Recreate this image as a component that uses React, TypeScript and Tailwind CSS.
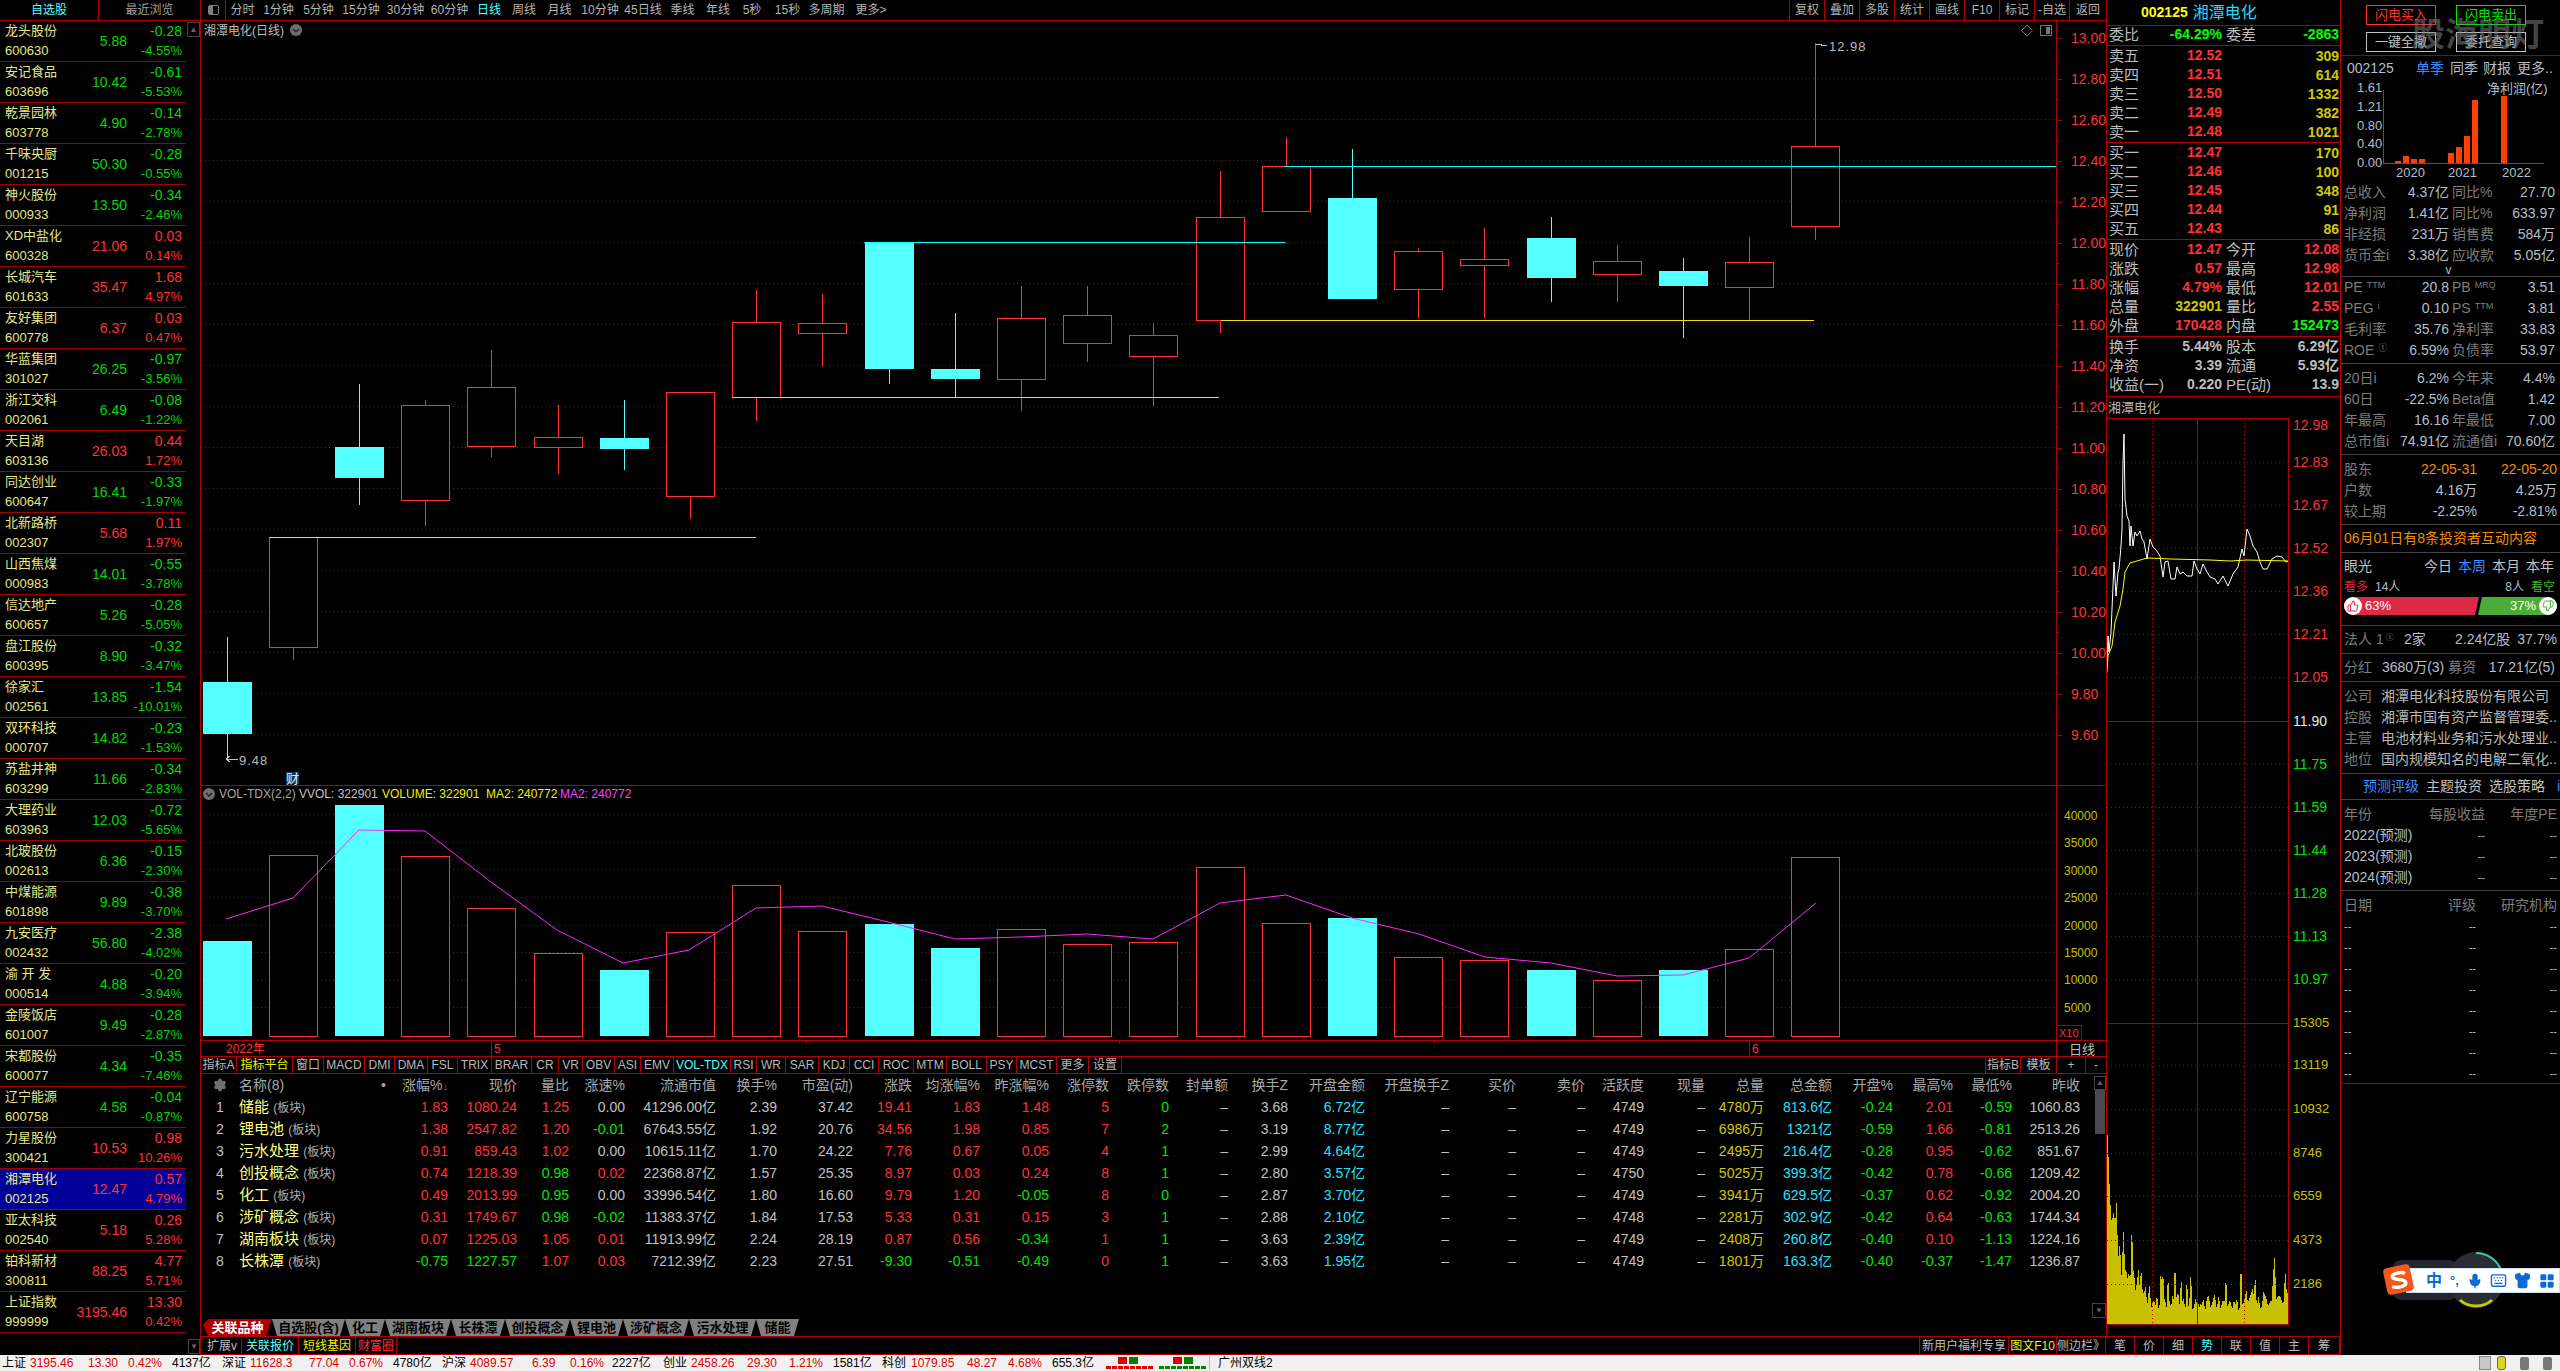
import type { ReactNode } from "react";
import { Mic, Keyboard, Shirt, LayoutGrid, Settings, ThumbsUp, ThumbsDown } from "lucide-react";

const RED = "#ff3232";
const CYAN = "#54ffff";
const LINE = "#b00000";

const watchList = [
    ["龙头股份", "600630", "5.88", "-0.28", "-4.55%"],
    ["安记食品", "603696", "10.42", "-0.61", "-5.53%"],
    ["乾景园林", "603778", "4.90", "-0.14", "-2.78%"],
    ["千味央厨", "001215", "50.30", "-0.28", "-0.55%"],
    ["神火股份", "000933", "13.50", "-0.34", "-2.46%"],
    ["XD中盐化", "600328", "21.06", "0.03", "0.14%"],
    ["长城汽车", "601633", "35.47", "1.68", "4.97%"],
    ["友好集团", "600778", "6.37", "0.03", "0.47%"],
    ["华蓝集团", "301027", "26.25", "-0.97", "-3.56%"],
    ["浙江交科", "002061", "6.49", "-0.08", "-1.22%"],
    ["天目湖", "603136", "26.03", "0.44", "1.72%"],
    ["同达创业", "600647", "16.41", "-0.33", "-1.97%"],
    ["北新路桥", "002307", "5.68", "0.11", "1.97%"],
    ["山西焦煤", "000983", "14.01", "-0.55", "-3.78%"],
    ["信达地产", "600657", "5.26", "-0.28", "-5.05%"],
    ["盘江股份", "600395", "8.90", "-0.32", "-3.47%"],
    ["徐家汇", "002561", "13.85", "-1.54", "-10.01%"],
    ["双环科技", "000707", "14.82", "-0.23", "-1.53%"],
    ["苏盐井神", "603299", "11.66", "-0.34", "-2.83%"],
    ["大理药业", "603963", "12.03", "-0.72", "-5.65%"],
    ["北玻股份", "002613", "6.36", "-0.15", "-2.30%"],
    ["中煤能源", "601898", "9.89", "-0.38", "-3.70%"],
    ["九安医疗", "002432", "56.80", "-2.38", "-4.02%"],
    ["渝 开 发", "000514", "4.88", "-0.20", "-3.94%"],
    ["金陵饭店", "601007", "9.49", "-0.28", "-2.87%"],
    ["宋都股份", "600077", "4.34", "-0.35", "-7.46%"],
    ["辽宁能源", "600758", "4.58", "-0.04", "-0.87%"],
    ["力星股份", "300421", "10.53", "0.98", "10.26%"],
    ["湘潭电化", "002125", "12.47", "0.57", "4.79%"],
    ["亚太科技", "002540", "5.18", "0.26", "5.28%"],
    ["铂科新材", "300811", "88.25", "4.77", "5.71%"],
    ["上证指数", "999999", "3195.46", "13.30", "0.42%"],
];

// [high, bodyTop, bodyBottom, low, falling]
const candles: [number, number, number, number, boolean][] = [
    [637, 682, 734, 759, true],
    [537, 537, 647, 660, false],
    [384, 447, 478, 505, true],
    [400, 405, 500, 526, false],
    [350, 387, 446, 457, false],
    [405, 437, 447, 474, false],
    [400, 438, 449, 470, true],
    [392, 392, 496, 519, false],
    [290, 322, 397, 421, false],
    [294, 323, 333, 366, false],
    [242, 242, 369, 384, true],
    [313, 369, 379, 397, true],
    [286, 318, 379, 411, false],
    [286, 315, 343, 362, false],
    [323, 335, 356, 406, false],
    [171, 217, 320, 333, false],
    [137, 166, 211, 211, false],
    [149, 198, 299, 299, true],
    [248, 251, 289, 318, false],
    [228, 259, 265, 318, false],
    [217, 238, 278, 302, true],
    [245, 261, 274, 302, false],
    [258, 271, 286, 338, true],
    [237, 262, 287, 321, false],
    [43, 146, 226, 240, false],
];
const volTops = [941, 855, 805, 856, 908, 953, 970, 932, 885, 931, 924, 948, 929, 944, 942, 867, 923, 918, 957, 960, 970, 980, 970, 949, 857];
const maLine = "226,919 293,898 359,830 425,831 491,882 557,930 623,963 689,950 756,908 822,906 888,922 955,939 1021,937 1087,934 1153,939 1220,903 1286,895 1352,918 1419,934 1485,957 1551,963 1617,976 1683,975 1749,958 1816,903";

const priceLabels = ["13.00", "12.80", "12.60", "12.40", "12.20", "12.00", "11.80", "11.60", "11.40", "11.20", "11.00", "10.80", "10.60", "10.40", "10.20", "10.00", "9.80", "9.60"];
const volLabels = ["40000", "35000", "30000", "25000", "20000", "15000", "10000", "5000"];

const periods: [string, string][] = [
    ["分时", "w-[33px]"], ["1分钟", "w-[39px]"], ["5分钟", "w-[41px]"], ["15分钟", "w-[44px]"], ["30分钟", "w-[45px]"], ["60分钟", "w-[43px]"],
    ["日线", "w-[36px]"], ["周线", "w-[34px]"], ["月线", "w-[37px]"], ["10分钟", "w-[44px]"], ["45日线", "w-[42px]"], ["季线", "w-[37px]"],
    ["年线", "w-[34px]"], ["5秒", "w-[34px]"], ["15秒", "w-[37px]"], ["多周期", "w-[41px]"], ["更多>", "w-[48px]"],
];
const toolButtons = ["复权", "叠加", "多股", "统计", "画线", "F10", "标记", "-自选"];

const indicatorTabs: [string, string][] = [
    ["指标A", "w-[36px]"], ["指标平台", "w-[56px]"], ["窗口", "w-[31px]"], ["MACD", "w-[41px]"], ["DMI", "w-[30px]"], ["DMA", "w-[33px]"], ["FSL", "w-[30px]"],
    ["TRIX", "w-[34px]"], ["BRAR", "w-[40px]"], ["CR", "w-[27px]"], ["VR", "w-[24px]"], ["OBV", "w-[32px]"], ["ASI", "w-[26px]"], ["EMV", "w-[33px]"],
    ["VOL-TDX", "w-[57px]"], ["RSI", "w-[26px]"], ["WR", "w-[29px]"], ["SAR", "w-[33px]"], ["KDJ", "w-[31px]"], ["CCI", "w-[29px]"], ["ROC", "w-[35px]"],
    ["MTM", "w-[33px]"], ["BOLL", "w-[40px]"], ["PSY", "w-[30px]"], ["MCST", "w-[40px]"], ["更多", "w-[32px]"], ["设置", "w-[33px]"],
];

const tableGrid = "grid grid-cols-[38px_161px_48px_69px_52px_56px_91px_61px_76px_59px_68px_69px_60px_60px_59px_60px_77px_84px_67px_69px_59px_61px_59px_68px_61px_60px_59px_68px]";
const tableHeader = ["涨幅%", "现价", "量比", "涨速%", "流通市值", "换手%", "市盈(动)", "涨跌", "均涨幅%", "昨涨幅%", "涨停数", "跌停数", "封单额", "换手Z", "开盘金额", "开盘换手Z", "买价", "卖价", "活跃度", "现量", "总量", "总金额", "开盘%", "最高%", "最低%", "昨收"];
const cellColor: Record<string, string> = {
    r: "text-[#ff3232]",
    g: "text-[#00e600]",
    w: "text-[#c0c0c0]",
    c: "text-[#28e0ff]",
    y: "text-[#d0c800]",
};
const d = "w–";
const tableRows: [string, string, string[]][] = [
    ["储能", "(板块)", ["r1.83", "r1080.24", "r1.25", "w0.00", "w41296.00亿", "w2.39", "w37.42", "r19.41", "r1.83", "r1.48", "r5", "g0", d, "w3.68", "c6.72亿", d, d, d, "w4749", d, "y4780万", "c813.6亿", "g-0.24", "r2.01", "g-0.59", "w1060.83"]],
    ["锂电池", "(板块)", ["r1.38", "r2547.82", "r1.20", "g-0.01", "w67643.55亿", "w1.92", "w20.76", "r34.56", "r1.98", "r0.85", "r7", "g2", d, "w3.19", "c8.77亿", d, d, d, "w4749", d, "y6986万", "c1321亿", "g-0.59", "r1.66", "g-0.81", "w2513.26"]],
    ["污水处理", "(板块)", ["r0.91", "r859.43", "r1.02", "w0.00", "w10615.11亿", "w1.70", "w24.22", "r7.76", "r0.67", "r0.05", "r4", "g1", d, "w2.99", "c4.64亿", d, d, d, "w4749", d, "y2495万", "c216.4亿", "g-0.28", "r0.95", "g-0.62", "w851.67"]],
    ["创投概念", "(板块)", ["r0.74", "r1218.39", "g0.98", "r0.02", "w22368.87亿", "w1.57", "w25.35", "r8.97", "r0.03", "r0.24", "r8", "g1", d, "w2.80", "c3.57亿", d, d, d, "w4750", d, "y5025万", "c399.3亿", "g-0.42", "r0.78", "g-0.66", "w1209.42"]],
    ["化工", "(板块)", ["r0.49", "r2013.99", "g0.95", "w0.00", "w33996.54亿", "w1.80", "w16.60", "r9.79", "r1.20", "g-0.05", "r8", "g0", d, "w2.87", "c3.70亿", d, d, d, "w4749", d, "y3941万", "c629.5亿", "g-0.37", "r0.62", "g-0.92", "w2004.20"]],
    ["涉矿概念", "(板块)", ["r0.31", "r1749.67", "g0.98", "g-0.02", "w11383.37亿", "w1.84", "w17.53", "r5.33", "r0.31", "r0.15", "r3", "g1", d, "w2.88", "c2.10亿", d, d, d, "w4748", d, "y2281万", "c302.9亿", "g-0.42", "r0.64", "g-0.63", "w1744.34"]],
    ["湖南板块", "(板块)", ["r0.07", "r1225.03", "r1.05", "r0.01", "w11913.99亿", "w2.24", "w28.19", "r0.87", "r0.56", "g-0.34", "r1", "g1", d, "w3.63", "c2.39亿", d, d, d, "w4749", d, "y2408万", "c260.8亿", "g-0.40", "r0.10", "g-1.13", "w1224.16"]],
    ["长株潭", "(板块)", ["g-0.75", "g1227.57", "r1.07", "r0.03", "w7212.39亿", "w2.23", "w27.51", "g-9.30", "g-0.51", "g-0.49", "r0", "g1", d, "w3.63", "c1.95亿", d, d, d, "w4749", d, "y1801万", "c163.3亿", "g-0.40", "g-0.37", "g-1.47", "w1236.87"]],
];

const groupTabs: [string, string][] = [
    ["自选股(含)", "w-[73px]"], ["化工", "w-[40px]"], ["湖南板块", "w-[66px]"], ["长株潭", "w-[54px]"], ["创投概念", "w-[65px]"],
    ["锂电池", "w-[53px]"], ["涉矿概念", "w-[66px]"], ["污水处理", "w-[67px]"], ["储能", "w-[43px]"],
];

const sideTabs = ["笔", "价", "细", "势", "联", "值", "主", "筹"];

const statusCells: [string, string, string][] = [
    ["上证", "text-black", "w-[28px]"], ["3195.46", "text-[#e00000]", "w-[58px]"], ["13.30", "text-[#e00000]", "w-[40px]"], ["0.42%", "text-[#e00000]", "w-[44px]"], ["4137亿", "text-black", "w-[50px]"],
    ["深证", "text-black", "w-[28px]"], ["11628.3", "text-[#e00000]", "w-[59px]"], ["77.04", "text-[#e00000]", "w-[40px]"], ["0.67%", "text-[#e00000]", "w-[44px]"], ["4780亿", "text-black", "w-[49px]"],
    ["沪深", "text-black", "w-[28px]"], ["4089.57", "text-[#e00000]", "w-[62px]"], ["6.39", "text-[#e00000]", "w-[38px]"], ["0.16%", "text-[#e00000]", "w-[42px]"], ["2227亿", "text-black", "w-[51px]"],
    ["创业", "text-black", "w-[28px]"], ["2458.26", "text-[#e00000]", "w-[56px]"], ["29.30", "text-[#e00000]", "w-[42px]"], ["1.21%", "text-[#e00000]", "w-[44px]"], ["1581亿", "text-black", "w-[49px]"],
    ["科创", "text-black", "w-[29px]"], ["1079.85", "text-[#e00000]", "w-[56px]"], ["48.27", "text-[#e00000]", "w-[41px]"], ["4.68%", "text-[#e00000]", "w-[44px]"], ["655.3亿", "text-black", "w-[52px]"],
];

const shareLine = "2107,667 2108,637 2109,653 2111,633 2112,610 2113,587 2114,563 2116,597 2118,573 2119,570 2121,547 2122,530 2123,463 2124,435 2125,500 2127,517 2129,522 2130,547 2131,527 2133,547 2135,533 2137,537 2140,532 2142,540 2144,543 2147,560 2150,540 2153,548 2157,552 2160,557 2163,578 2165,563 2168,562 2171,580 2175,580 2177,568 2180,575 2183,573 2187,577 2192,577 2194,562 2197,570 2200,575 2203,565 2207,573 2210,578 2215,580 2218,585 2223,577 2228,587 2233,575 2238,568 2242,550 2244,557 2247,530 2250,537 2253,547 2257,553 2260,563 2263,570 2267,570 2272,560 2277,557 2282,558 2286,563 2288,562";
const shareAvg = "2107,673 2108,657 2112,647 2115,623 2120,607 2123,590 2125,573 2130,564 2137,562 2147,559 2172,560 2210,561 2230,562 2247,561 2288,562";

// volume spikes of the day chart, one per pixel column
const shareVol = (() => {
    let seed = 17;
    const next = () => {
        seed = (seed * 9301 + 49297) % 233280;
        return seed / 233280;
    };
    let path = "M2107 1326";
    for (let x = 2107; x <= 2288; x += 1) {
        const base = 30 + 190 * Math.exp(-(x - 2107) / 14);
        const spike = next() > 0.88 ? 70 * next() : 0;
        const h = base * (0.45 + 0.6 * next()) + spike + (x > 2240 ? 8 * next() : 0);
        path += ` L${x} ${Math.round(1326 - h)}`;
    }
    return path + " L2288 1326 Z";
})();

const WatchList = () => (
    <div className="w-[201px] shrink-0 border-r border-[#b00000] flex flex-col relative">
        <div className="h-[21px] shrink-0 flex border-b border-[#b00000] text-[12px]">
            <div className="w-[99px] border-r border-[#b00000] flex items-center justify-center text-[#54ffff]">自选股</div>
            <div className="flex-1 flex items-center justify-center text-[#a0a0a0]">最近浏览</div>
        </div>
        <div className="w-[186px]">
            {watchList.map((s, index) => {
                const up = !s[3].startsWith("-");
                const color = up ? "text-[#ff3232]" : "text-[#00d800]";
                return (
                    <div key={index} className={`h-[41px] flex items-center border-b border-[#a00000] ${s[1] === "002125" ? "bg-[#000098]" : ""}`}>
                        <div className="w-[64px] pl-[5px] text-[13px] leading-[20px] text-[#e6e68c] whitespace-nowrap">
                            <div>{s[0]}</div>
                            <div>{s[1]}</div>
                        </div>
                        <div className={`w-[63px] text-right text-[14px] ${color}`}>{s[2]}</div>
                        <div className={`flex-1 pr-[4px] text-right leading-[20px] ${color}`}>
                            <div className="text-[14px]">{s[3]}</div>
                            <div className="text-[13px] whitespace-nowrap">{s[4]}</div>
                        </div>
                    </div>
                );
            })}
        </div>
        <div className="absolute left-[187px] top-[22px] w-[13px] h-[15px] border border-[#444] flex items-center justify-center text-[8px] text-[#666]">▲</div>
        <div className="absolute left-[188px] bottom-[1px] w-[12px] h-[15px] border border-[#444] flex items-center justify-center text-[8px] text-[#666]">▼</div>
    </div>
);

const KLineChart = () => (
    <svg width={1905} height={1036} viewBox="201 21 1905 1036" shapeRendering="crispEdges" className="block shrink-0">
        {priceLabels.slice(1).map((_, i) => (
            <line key={i} x1={201} x2={2056} y1={78.5 + i * 41} y2={78.5 + i * 41} stroke={LINE} strokeDasharray="1 3" />
        ))}
        {[814, 842, 869, 897, 925, 952, 980, 1007].map((y) => (
            <line key={y} x1={201} x2={2056} y1={y + 0.5} y2={y + 0.5} stroke={LINE} strokeDasharray="1 3" />
        ))}

        {candles.map(([hi, top, bottom, lo, falling], i) => {
            const cx = Math.round(226.5 + i * 66.2);
            const color = falling ? CYAN : RED;
            return (
                <g key={i}>
                    <line x1={cx + 0.5} x2={cx + 0.5} y1={hi} y2={lo} stroke={color} />
                    {falling ? (
                        <rect x={cx - 24} y={top} width={49} height={bottom - top} fill={CYAN} />
                    ) : (
                        <rect x={cx - 23.5} y={top + 0.5} width={48} height={bottom - top} fill="#000" stroke={RED} />
                    )}
                </g>
            );
        })}

        <polyline points="269,537.5 756,537.5" stroke="#f0e000" fill="none" />
        <polyline points="732,397.5 1219,397.5" stroke="#f0e000" fill="none" />
        <polyline points="1221,320.5 1814,320.5" stroke="#f0e000" fill="none" />
        <polyline points="864,242.5 1285,242.5" stroke="#00ffff" fill="none" />
        <polyline points="1283,166.5 2056,166.5" stroke="#00ffff" fill="none" />

        <path d="M1816 44 L1827 46" stroke="#c0c0c0" fill="none" />
        <text x={1829} y={51} fontSize={13} fill="#b8b8b8" letterSpacing={1}>12.98</text>
        <path d="M226 759 L238 759 M226 759 L230 756 M226 759 L230 762" stroke="#c0c0c0" fill="none" />
        <text x={239} y={765} fontSize={13} fill="#b8b8b8" letterSpacing={1}>9.48</text>

        <text x={204} y={35} fontSize={12} fill="#bdbdbd">湘潭电化(日线)</text>
        <g shapeRendering="auto">
            <circle cx={296} cy={30} r={6} fill="#6e6e6e" />
            <path d="M293 29 L296 32 L299 29" stroke="#222" strokeWidth={1.4} fill="none" />
            <path d="M2027 25 L2032.5 30.5 L2027 36 L2021.5 30.5 Z" stroke="#777" fill="none" />
        </g>
        <rect x={2040.5} y={25.5} width={11} height={10} rx={1.5} stroke="#777" strokeWidth={1.5} fill="none" />
        <rect x={2046} y={27} width={4} height={7} fill="#777" />

        <rect x={286} y={772} width={13} height={12} fill="#0a3868" />
        <text x={286} y={783} fontSize={13} fill="#e8e8e8">财</text>

        {/* volume */}
        <line x1={201} x2={2106} y1={785.5} y2={785.5} stroke={LINE} />
        <g shapeRendering="auto">
            <circle cx={209} cy={794} r={6} fill="#6e6e6e" />
            <path d="M206 793 L209 796 L212 793" stroke="#222" strokeWidth={1.4} fill="none" />
        </g>
        <text x={219} y={798} fontSize={12} fill="#a8a8a8">VOL-TDX(2,2)</text>
        <text x={299} y={798} fontSize={12} fill="#c0c0c0">VVOL: 322901</text>
        <text x={382} y={798} fontSize={12} fill="#f0f000">VOLUME: 322901</text>
        <text x={486} y={798} fontSize={12} fill="#f0f000">MA2: 240772</text>
        <text x={560} y={798} fontSize={12} fill="#ff40ff">MA2: 240772</text>

        {volTops.map((top, i) => {
            const cx = Math.round(226.5 + i * 66.2);
            const falling = candles[i][4];
            return falling ? (
                <rect key={i} x={cx - 24} y={top} width={49} height={1036 - top} fill={CYAN} />
            ) : (
                <rect key={i} x={cx - 23.5} y={top + 0.5} width={48} height={1036 - top} fill="#000" stroke={RED} />
            );
        })}
        <polyline points={maLine} fill="none" stroke="#ff28ff" shapeRendering="auto" />

        {/* price scale */}
        <line x1={2056.5} x2={2056.5} y1={21} y2={1057} stroke={LINE} />
        {Array.from({ length: 35 }).map((_, i) => (
            <line key={i} x1={2056} x2={i % 2 === 0 ? 2062 : 2059} y1={Math.round(37.5 + i * 20.5) + 0.5} y2={Math.round(37.5 + i * 20.5) + 0.5} stroke={LINE} />
        ))}
        {priceLabels.map((p, i) => (
            <text key={p} x={2071} y={43 + i * 41} fontSize={14} fill={RED} shapeRendering="auto">{p}</text>
        ))}
        {volLabels.map((p, i) => (
            <text key={p} x={2064} y={820 + i * 27.4} fontSize={12} fill="#c8c000">{p}</text>
        ))}
        <rect x={2056.5} y={1025.5} width={25} height={15} fill="none" stroke={LINE} />
        <text x={2059} y={1037} fontSize={11} fill={RED}>X10</text>

        {/* date axis */}
        <line x1={201} x2={2106} y1={1040.5} y2={1040.5} stroke={LINE} />
        <line x1={201} x2={2106} y1={1056.5} y2={1056.5} stroke={LINE} />
        <text x={226} y={1053} fontSize={12} fill={RED}>2022年</text>
        <line x1={491.5} x2={491.5} y1={1041} y2={1056} stroke={LINE} />
        <text x={494} y={1053} fontSize={12} fill={RED}>5</text>
        <line x1={1749.5} x2={1749.5} y1={1041} y2={1056} stroke={LINE} />
        <text x={1752} y={1053} fontSize={12} fill={RED}>6</text>
        {[806, 1119, 1434].map((x) => (
            <line key={x} x1={x + 0.5} x2={x + 0.5} y1={1041} y2={1044} stroke={LINE} />
        ))}
        <text x={2069} y={1054} fontSize={13} fill="#bdbdbd">日线</text>
    </svg>
);

const Toolbar = () => (
    <div className="h-[21px] shrink-0 flex border-b border-[#b00000] text-[12px] text-[#b4b4b4]">
        <div className="w-[25px] flex items-center justify-center border-r border-[#b00000]">
            <div className="w-[11px] h-[10px] rounded-[2px] border-[1.5px] border-[#808080] flex">
                <div className="w-[4px] bg-[#808080]"></div>
            </div>
        </div>
        <div className="flex">
            {periods.map(([label, w]) => (
                <div key={label} className={`${w} flex items-center justify-center whitespace-nowrap ${label === "日线" ? "text-[#54ffff]" : ""}`}>{label}</div>
            ))}
        </div>
        <div className="ml-auto flex">
            {toolButtons.map((b) => (
                <div key={b} className="w-[35px] flex items-center justify-center border-l border-[#b00000] whitespace-nowrap">{b}</div>
            ))}
            <div className="w-[37px] flex items-center justify-center border-l border-[#b00000]">返回</div>
        </div>
    </div>
);

const IndicatorTabs = () => (
    <div className="h-[17px] shrink-0 flex border-b border-[#b00000] text-[12px] text-[#b8b8b8]">
        {indicatorTabs.map(([label, w]) => (
            <div key={label} className={`${w} flex items-center justify-center border-r border-[#b00000] whitespace-nowrap overflow-hidden ${label === "指标平台" ? "text-[#f0f000]" : ""} ${label === "VOL-TDX" ? "text-[#54ffff]" : ""}`}>
                {label}
            </div>
        ))}
        <div className="ml-auto flex">
            <div className="w-[36px] flex items-center justify-center border-x border-[#b00000]">指标B</div>
            <div className="w-[36px] flex items-center justify-center border-r border-[#b00000]">模板</div>
            <div className="w-[29px] flex items-center justify-center border-r border-[#b00000]">+</div>
            <div className="w-[20px] flex items-center justify-center">-</div>
        </div>
    </div>
);

const BlockTable = () => (
    <div className="flex-1 relative overflow-hidden">
        <div className={`${tableGrid} h-[22px] items-center text-[14px] text-[#a8a8a8]`}>
            <div className="flex justify-center">
                <Settings size={14} className="text-[#707070] fill-[#707070]" />
            </div>
            <div className="flex justify-between pr-[14px]">
                <span>名称(8)</span>
                <span className="text-[#a0a0a0]">•</span>
            </div>
            {tableHeader.map((h, i) => (
                <div key={h} className="text-right whitespace-nowrap">
                    {h}
                    {i === 0 && <span className="text-[#ff3232] text-[11px]">↓</span>}
                </div>
            ))}
        </div>
        {tableRows.map(([name, kind, cells], index) => (
            <div key={name} className={`${tableGrid} h-[22px] items-center text-[14px]`}>
                <div className="text-center text-[#c0c0c0]">{index + 1}</div>
                <div className="text-[15px] text-[#ffff80] whitespace-nowrap">
                    {name} <span className="text-[12px] text-[#b0b0b0]">{kind}</span>
                </div>
                {cells.map((c, i) => (
                    <div key={i} className={`text-right whitespace-nowrap ${cellColor[c[0]]}`}>{c.slice(1)}</div>
                ))}
            </div>
        ))}
        <div className="absolute right-0 top-[2px] w-[12px] h-[14px] border border-[#444] flex items-center justify-center text-[8px] text-[#666]">▲</div>
        <div className="absolute right-[1px] top-[16px] w-[10px] h-[44px] bg-[#4a4a4a]"></div>
        <div className="absolute right-0 bottom-[1px] w-[14px] h-[15px] border border-[#444] flex items-center justify-center text-[8px] text-[#666]">▼</div>
    </div>
);

const GroupTabs = () => (
    <div className="h-[17px] shrink-0 flex pl-[2px] text-[13px] font-bold text-black">
        <div className="w-[69px] bg-[#b00000] text-white flex items-center justify-center [clip-path:polygon(5px_0,100%_0,calc(100%-6px)_100%,5px_100%,0_35%)]">关联品种</div>
        {groupTabs.map(([label, w]) => (
            <div key={label} className={`${w} bg-[#808080] flex items-center justify-center whitespace-nowrap [clip-path:polygon(0_0,100%_0,calc(100%-5px)_100%,5px_100%)]`}>
                {label}
            </div>
        ))}
    </div>
);

const QuoteRow = ({ a, b, c, e, bColor, eColor }: { a: string; b: string; c?: string; e?: string; bColor: string; eColor?: string }) => (
    <div className="h-[19px] flex items-center text-[14px] font-bold whitespace-nowrap">
        <div className="w-[115px] pl-[2px] flex justify-between">
            <span className="text-[15px] font-normal text-[#bdbdbd]">{a}</span>
            <span className={bColor}>{b}</span>
        </div>
        <div className="flex-1 pl-[4px] pr-[1px] flex justify-between">
            <span className="text-[15px] font-normal text-[#bdbdbd]">{c}</span>
            <span className={eColor}>{e}</span>
        </div>
    </div>
);

const AskRow = ({ a, p, v }: { a: string; p: string; v: string }) => (
    <div className="h-[19px] flex items-center text-[14px] font-bold">
        <div className="w-[115px] pl-[2px] flex justify-between">
            <span className="text-[15px] font-normal text-[#bdbdbd]">{a}</span>
            <span className="text-[#ff3232]">{p}</span>
        </div>
        <span className="flex-1 pr-[1px] text-right text-[#d0c800]">{v}</span>
    </div>
);

const QuotePanel = () => (
    <div className="w-[234px] shrink-0 border-l border-[#b00000] flex flex-col">
        <div className="h-[26px] border-b border-[#b00000] flex items-center pl-[34px] gap-[5px]">
            <span className="text-[14px] font-bold text-[#ffff00]">002125</span>
            <span className="text-[16px] text-[#28d8ff]">湘潭电化</span>
        </div>
        <div className="h-[20px] border-b border-[#b00000] flex items-center text-[14px] font-bold">
            <div className="w-[115px] pl-[2px] flex justify-between">
                <span className="text-[15px] font-normal text-[#bdbdbd]">委比</span>
                <span className="text-[#00ff00]">-64.29%</span>
            </div>
            <div className="flex-1 pl-[4px] pr-[1px] flex justify-between">
                <span className="text-[15px] font-normal text-[#bdbdbd]">委差</span>
                <span className="text-[#00ff00]">-2863</span>
            </div>
        </div>
        <div className="h-[97px] pt-[1px] border-b border-[#b00000]">
            <AskRow a="卖五" p="12.52" v="309" />
            <AskRow a="卖四" p="12.51" v="614" />
            <AskRow a="卖三" p="12.50" v="1332" />
            <AskRow a="卖二" p="12.49" v="382" />
            <AskRow a="卖一" p="12.48" v="1021" />
        </div>
        <div className="h-[97px] pt-[1px] border-b border-[#b00000]">
            <AskRow a="买一" p="12.47" v="170" />
            <AskRow a="买二" p="12.46" v="100" />
            <AskRow a="买三" p="12.45" v="348" />
            <AskRow a="买四" p="12.44" v="91" />
            <AskRow a="买五" p="12.43" v="86" />
        </div>
        <div className="h-[97px] pt-[1px] border-b border-[#b00000]">
            <QuoteRow a="现价" b="12.47" bColor="text-[#ff3232]" c="今开" e="12.08" eColor="text-[#ff3232]" />
            <QuoteRow a="涨跌" b="0.57" bColor="text-[#ff3232]" c="最高" e="12.98" eColor="text-[#ff3232]" />
            <QuoteRow a="涨幅" b="4.79%" bColor="text-[#ff3232]" c="最低" e="12.01" eColor="text-[#ff3232]" />
            <QuoteRow a="总量" b="322901" bColor="text-[#d0c800]" c="量比" e="2.55" eColor="text-[#ff3232]" />
            <QuoteRow a="外盘" b="170428" bColor="text-[#ff3232]" c="内盘" e="152473" eColor="text-[#00ff00]" />
        </div>
        <div className="h-[60px] pt-[1px] border-b border-[#b00000]">
            <QuoteRow a="换手" b="5.44%" bColor="text-[#bdbdbd]" c="股本" e="6.29亿" eColor="text-[#bdbdbd]" />
            <QuoteRow a="净资" b="3.39" bColor="text-[#bdbdbd]" c="流通" e="5.93亿" eColor="text-[#bdbdbd]" />
            <QuoteRow a="收益(一)" b="0.220" bColor="text-[#bdbdbd]" c="PE(动)" e="13.9" eColor="text-[#bdbdbd]" />
        </div>
        <div className="h-[21px] pl-[1px] flex items-center text-[13px] text-[#b4b4b4]">湘潭电化</div>
        <ShareChart />
    </div>
);

const ShareChart = () => {
    const up: [string, number][] = [["12.98", 419], ["12.83", 463], ["12.67", 506], ["12.52", 549], ["12.36", 592], ["12.21", 635], ["12.05", 678]];
    const down: [string, number][] = [["11.75", 765], ["11.59", 808], ["11.44", 851], ["11.28", 894], ["11.13", 937], ["10.97", 980]];
    const vols: [string, number][] = [["15305", 1024], ["13119", 1066], ["10932", 1110], ["8746", 1154], ["6559", 1197], ["4373", 1241], ["2186", 1285]];
    return (
        <svg width={233} height={917} viewBox="2107 419 233 917" shapeRendering="crispEdges" className="block">
            <path d={shareVol} fill="#c8c000" />
            {[...up, ...down, ...vols.slice(1)].map(([l, y]) => (
                <line key={l} x1={2107} x2={2289} y1={y + 0.5} y2={y + 0.5} stroke={LINE} strokeDasharray="1 3" />
            ))}
            <rect x={2106.5} y={419.5} width={182} height={906} fill="none" stroke={LINE} />
            <line x1={2107} x2={2289} y1={722.5} y2={722.5} stroke={LINE} />
            <line x1={2107} x2={2289} y1={1024.5} y2={1024.5} stroke={LINE} />
            <line x1={2197.5} x2={2197.5} y1={419} y2={1326} stroke={LINE} />
            <line x1={2152.5} x2={2152.5} y1={419} y2={1326} stroke={LINE} strokeDasharray="1 3" />
            <line x1={2244.5} x2={2244.5} y1={419} y2={1326} stroke={LINE} strokeDasharray="1 3" />
            <polyline points={shareLine} fill="none" stroke="#fff" shapeRendering="auto" />
            <polyline points={shareAvg} fill="none" stroke="#ffff00" shapeRendering="auto" />
            {up.map(([l, y]) => (
                <text key={l} x={2293} y={Math.max(y + 5, 431)} fontSize={14} fill={RED}>{l}</text>
            ))}
            <text x={2293} y={727} fontSize={14} fill="#e8e8e8">11.90</text>
            {down.map(([l, y]) => (
                <text key={l} x={2293} y={y + 5} fontSize={14} fill="#00e600">{l}</text>
            ))}
            {vols.map(([l, y]) => (
                <text key={l} x={2293} y={y + 4} fontSize={13} fill="#c8c000">{l}</text>
            ))}
        </svg>
    );
};

const F10Row = ({ a, b, c, e }: { a: ReactNode; b: string; c: ReactNode; e: string }) => (
    <div className="h-[21px] flex items-center pl-[3px] pr-[5px] text-[14px] whitespace-nowrap">
        <div className="w-[105px] flex justify-between">
            <span className="text-[#7c7c7c]">{a}</span>
            <span className="text-[#b4bec8]">{b}</span>
        </div>
        <div className="flex-1 pl-[3px] flex justify-between">
            <span className="text-[#7c7c7c]">{c}</span>
            <span className="text-[#b4bec8]">{e}</span>
        </div>
    </div>
);

const Sup = ({ t }: { t: string }) => <sup className="text-[9px] ml-[4px]">{t}</sup>;

const Dashes = () => (
    <div className="h-[21px] flex items-center pl-[3px] pr-[3px] text-[11px] text-[#c0c0c0]">
        <span className="w-[70px]">--</span>
        <span className="w-[62px] text-right">--</span>
        <span className="flex-1 text-right">--</span>
    </div>
);

const ThreeRow = ({ a, b, c }: { a: string; b: string; c: string }) => (
    <div className="h-[21px] flex items-center pl-[3px] pr-[3px] text-[14px] whitespace-nowrap text-[#b4bec8]">
        <span className="w-[60px] text-[#7c7c7c]">{a}</span>
        <span className="w-[73px] text-right">{b}</span>
        <span className="flex-1 text-right">{c}</span>
    </div>
);

const MiniBars = () => {
    const bars = [[2395, 161], [2403, 156], [2411, 159], [2419, 159], [2448, 153], [2456, 147], [2464, 136], [2472, 100], [2501, 96]];
    return (
        <svg width={219} height={102} viewBox="2341 80 219 102" className="block" shapeRendering="crispEdges">
            <line x1={2383.5} x2={2383.5} y1={90} y2={163} stroke="#555" />
            <line x1={2383} x2={2544} y1={163.5} y2={163.5} stroke="#555" />
            {[["1.61", 92], ["1.21", 111], ["0.80", 130], ["0.40", 148], ["0.00", 167]].map(([t, y]) => (
                <text key={t} x={2357} y={y} fontSize={13} fill="#b4bec8">{t}</text>
            ))}
            {bars.map(([x, y]) => (
                <rect key={x} x={x} y={y} width={6} height={163 - y} fill="#ff4000" />
            ))}
            <text x={2487} y={93} fontSize={13} fill="#b4bec8">净利润(亿)</text>
            {[["2020", 2410], ["2021", 2462], ["2022", 2516]].map(([t, x]) => (
                <text key={t} x={Number(x) - 14} y={177} fontSize={13} fill="#b4bec8">{t}</text>
            ))}
        </svg>
    );
};

const F10Panel = () => (
    <div className="w-[219px] shrink-0 relative">
        <div className="h-[56px] border-b border-[#a00000] pl-[25px] pt-[5px] grid grid-cols-[70px_70px] gap-x-[20px] gap-y-[4px] text-[13px]">
            <div className="h-[20px] border border-[#ff3232] text-[#ff3232] flex items-center justify-center">闪电买入</div>
            <div className="h-[20px] border border-[#00e600] text-[#00e600] flex items-center justify-center">闪电卖出</div>
            <div className="h-[20px] border border-[#c0c0c0] text-[#c0c0c0] flex items-center justify-center">一键全撤</div>
            <div className="h-[20px] border border-[#c0c0c0] text-[#c0c0c0] flex items-center justify-center">委托查询</div>
        </div>
        <div className="h-[24px] flex items-center text-[14px] text-[#b4bec8] pl-[6px]">
            <span className="w-[69px]">002125</span>
            <span className="w-[34px] text-[#3c8cff]">单季</span>
            <span className="w-[33px]">同季</span>
            <span className="w-[34px]">财报</span>
            <span>更多..</span>
        </div>
        <MiniBars />
        <div className="border-b border-[#444] h-[95px]">
            <F10Row a="总收入" b="4.37亿" c="同比%" e="27.70" />
            <F10Row a="净利润" b="1.41亿" c="同比%" e="633.97" />
            <F10Row a="非经损" b="231万" c="销售费" e="584万" />
            <F10Row a="货币金i" b="3.38亿" c="应收款" e="5.05亿" />
            <div className="h-[11px] leading-[8px] text-center text-[12px] text-[#b4bec8] pr-[4px]">v</div>
        </div>
        <div className="border-b border-[#444] h-[87px]">
            <F10Row a={<>PE<Sup t="TTM" /></>} b="20.8" c={<>PB<Sup t="MRQ" /></>} e="3.51" />
            <F10Row a={<>PEG<Sup t="i" /></>} b="0.10" c={<>PS<Sup t="TTM" /></>} e="3.81" />
            <F10Row a="毛利率" b="35.76" c="净利率" e="33.83" />
            <F10Row a={<>ROE<Sup t="①" /></>} b="6.59%" c="负债率" e="53.97" />
        </div>
        <div className="border-b border-[#444] h-[91px] pt-[4px]">
            <F10Row a="20日i" b="6.2%" c="今年来" e="4.4%" />
            <F10Row a="60日" b="-22.5%" c="Beta值" e="1.42" />
            <F10Row a="年最高" b="16.16" c="年最低" e="7.00" />
            <F10Row a="总市值i" b="74.91亿" c="流通值i" e="70.60亿" />
        </div>
        <div className="border-b border-[#444] h-[70px] pt-[4px]">
            <div className="h-[21px] flex items-center pl-[3px] pr-[3px] text-[14px] text-[#f08c00] whitespace-nowrap">
                <span className="w-[60px] text-[#7c7c7c]">股东</span>
                <span className="w-[73px] text-right">22-05-31</span>
                <span className="flex-1 text-right">22-05-20</span>
            </div>
            <ThreeRow a="户数" b="4.16万" c="4.25万" />
            <ThreeRow a="较上期" b="-2.25%" c="-2.81%" />
        </div>
        <div className="h-[28px] border-b border-[#444] flex items-center pl-[3px] text-[14px] text-[#f08c00] whitespace-nowrap">06月01日有8条投资者互动内容</div>
        <div className="border-b border-[#444] h-[73px]">
            <div className="h-[26px] flex items-center pl-[3px] text-[14px] text-[#c0c0c0]">
                <span className="w-[80px]">眼光</span>
                <span className="w-[34px]">今日</span>
                <span className="w-[34px] text-[#3c8cff]">本周</span>
                <span className="w-[34px]">本月</span>
                <span>本年</span>
            </div>
            <div className="h-[15px] flex items-center justify-between pl-[3px] pr-[5px] text-[12px]">
                <div><span className="text-[#dc2a46]">看多</span><span className="ml-[7px] text-[#b4bec8]">14人</span></div>
                <div><span className="text-[#b4bec8]">8人</span><span className="ml-[7px] text-[#4bad37]">看空</span></div>
            </div>
            <div className="mt-[3px] h-[18px] mx-[3px] flex text-[13px] text-white">
                <div className="w-[135px] bg-[#dc2a46] rounded-l-[9px] flex items-center [clip-path:polygon(0_0,100%_0,calc(100%-4px)_100%,0_100%)]">
                    <div className="w-[18px] h-[18px] rounded-full bg-white flex items-center justify-center">
                        <ThumbsUp size={12} className="text-[#dc2a46]" />
                    </div>
                    <span className="ml-[3px]">63%</span>
                </div>
                <div className="flex-1 -ml-[1px] bg-[#4bad37] rounded-r-[9px] flex items-center justify-end [clip-path:polygon(4px_0,100%_0,100%_100%,0_100%)]">
                    <span className="mr-[3px]">37%</span>
                    <div className="w-[18px] h-[18px] rounded-full bg-white flex items-center justify-center">
                        <ThumbsDown size={12} className="text-[#4bad37]" />
                    </div>
                </div>
            </div>
        </div>
        <div className="h-[28px] border-b border-[#444] flex items-center pl-[3px] pr-[3px] text-[14px] text-[#b4bec8] whitespace-nowrap">
            <span className="w-[60px] text-[#7c7c7c]">法人 1<sup className="text-[8px] ml-[2px]">①</sup></span>
            <span className="w-[51px]">2家</span>
            <span>2.24亿股</span>
            <span className="ml-auto">37.7%</span>
        </div>
        <div className="h-[28px] border-b border-[#444] flex items-center pl-[3px] pr-[5px] text-[14px] text-[#b4bec8] whitespace-nowrap">
            <span className="w-[38px] text-[#7c7c7c]">分红</span>
            <span className="w-[66px]">3680万(3)</span>
            <span className="text-[#7c7c7c]">募资</span>
            <span className="ml-auto">17.21亿(5)</span>
        </div>
        <div className="border-b border-[#444] h-[92px] pt-[4px] text-[14px] whitespace-nowrap">
            {[["公司", "湘潭电化科技股份有限公司"], ["控股", "湘潭市国有资产监督管理委.."], ["主营", "电池材料业务和污水处理业.."], ["地位", "国内规模知名的电解二氧化.."]].map(([a, b]) => (
                <div key={a} className="h-[21px] flex items-center pl-[3px]">
                    <span className="w-[37px] shrink-0 text-[#7c7c7c]">{a}</span>
                    <span className="text-[#b8b8b8]">{b}</span>
                </div>
            ))}
        </div>
        <div className="h-[26px] border-b border-[#444] flex items-center pl-[22px] text-[14px] text-[#c0c0c0] gap-[7px] whitespace-nowrap">
            <span className="text-[#3c8cff]">预测评级</span>
            <span>主题投资</span>
            <span>选股策略</span>
            <span className="ml-[5px] text-[#3c8cff]">i</span>
        </div>
        <div className="border-b border-[#444] h-[91px] pt-[4px] text-[#b4bec8]">
            <div className="h-[21px] flex items-center pl-[3px] pr-[3px] text-[14px] text-[#7c7c7c]">
                <span className="w-[80px]">年份</span>
                <span className="w-[61px] text-right">每股收益</span>
                <span className="flex-1 text-right">年度PE</span>
            </div>
            {["2022(预测)", "2023(预测)", "2024(预测)"].map((y) => (
                <div key={y} className="h-[21px] flex items-center pl-[3px] pr-[3px] text-[14px]">
                    <span className="w-[80px]">{y}</span>
                    <span className="w-[61px] text-right text-[11px]">--</span>
                    <span className="flex-1 text-right text-[11px]">--</span>
                </div>
            ))}
        </div>
        <div className="border-b border-[#333] h-[193px] pt-[4px]">
            <div className="h-[21px] flex items-center pl-[3px] pr-[3px] text-[14px] text-[#7c7c7c]">
                <span className="w-[70px]">日期</span>
                <span className="w-[62px] text-right">评级</span>
                <span className="flex-1 text-right">研究机构</span>
            </div>
            {[1, 2, 3, 4, 5, 6, 7, 8].map((i) => (
                <Dashes key={i} />
            ))}
        </div>
        {/* watermark over the buttons */}
        <div className="absolute left-[71px] top-[14px] text-[33px] leading-[42px] font-bold text-[#808080]/55 whitespace-nowrap">股海明灯</div>
    </div>
);

const BottomRow = () => (
    <div className="h-[19px] shrink-0 flex border-y border-[#b00000] text-[12px] text-[#bdbdbd] whitespace-nowrap">
        <div className="w-[39px] flex items-center justify-center ml-[2px] border-r border-[#b00000]">扩展v</div>
        <div className="w-[57px] flex items-center justify-center border-r border-[#b00000] text-[#54ffff]">关联报价</div>
        <div className="w-[57px] flex items-center justify-center border-r border-[#b00000] text-[#f0f000]">短线基因</div>
        <div className="w-[41px] flex items-center justify-center border-r border-[#b00000] text-[#ff3232]">财富圈</div>
        <div className="ml-auto flex">
            <div className="w-[89px] flex items-center justify-center border-l border-[#b00000]">新用户福利专享</div>
            <div className="w-[48px] flex items-center justify-center border-l border-[#b00000] text-[#f0f000]">图文F10</div>
            <div className="w-[50px] flex items-center justify-center border-x border-[#b00000]">侧边栏》</div>
            {sideTabs.map((t) => (
                <div key={t} className={`w-[29px] flex items-center justify-center border-r border-[#b00000] last:w-[31px] ${t === "势" ? "text-[#54ffff]" : ""}`}>{t}</div>
            ))}
        </div>
    </div>
);

const StatusBar = () => (
    <div className="h-[16px] shrink-0 bg-[#f0f0f0] flex items-center text-[12px] whitespace-nowrap">
        <div className="flex pl-[2px]">
            {statusCells.map(([t, color, w], i) => (
                <span key={i} className={`${w} ${color}`}>{t}</span>
            ))}
        </div>
        <svg width={106} height={14} viewBox="0 0 106 14" shapeRendering="crispEdges" className="border-r border-[#bbb]">
            <rect x={14} y={1} width={9} height={7} fill="#e00000" />
            <rect x={25} y={1} width={9} height={7} fill="#008000" />
            {[0, 6, 12, 18, 24, 30, 36, 42].map((x) => (
                <rect key={x} x={2 + x} y={10} width={5} height={3} fill="#e00000" />
            ))}
            <rect x={70} y={1} width={9} height={7} fill="#e00000" />
            <rect x={81} y={1} width={9} height={7} fill="#008000" />
            {[0, 6, 12, 18, 24, 30, 36, 42].map((x) => (
                <rect key={x} x={56 + x} y={10} width={5} height={3} fill="#008000" />
            ))}
        </svg>
        <span className="ml-[8px] text-black">广州双线2</span>
        <div className="ml-auto pr-[8px] flex items-center gap-[6px]">
            <div className="w-[12px] h-[14px] bg-[#c8c8c8] border border-[#888]"></div>
            <div className="w-[9px] h-[14px] rounded-[3px] bg-[#d8d820] border border-[#666]"></div>
            <div className="w-[9px] h-[13px] ml-[8px] bg-[#777] rounded-[2px]"></div>
            <div className="w-[9px] h-[13px] ml-[8px] bg-[#777] rounded-[2px]"></div>
        </div>
    </div>
);

const ImeBar = () => (
    <div className="absolute left-[2382px] top-[1250px] w-[178px] h-[60px]">
        <div className="absolute left-[11px] top-[10px] w-[64px] h-[40px] rounded-[8px] bg-[#23262c]"></div>
        <svg className="absolute left-[65px] top-[0px]" width={58} height={60} viewBox="0 0 58 60">
            <circle cx={29} cy={30} r={28} fill="#2a2d33" />
            <path d="M29 3 A27 27 0 0 1 54 20" stroke="#36c8a8" strokeWidth={2} fill="none" />
            <path d="M13 50 A24 24 0 0 0 45 50" stroke="#c8c800" strokeWidth={3} fill="none" />
        </svg>
        <div className="absolute left-[24px] top-[18px] w-[154px] h-[25px] bg-white border border-[#cfe0f0] flex items-center text-[#0a6cd8]">
            <span className="ml-[19px] text-[16px] font-bold">中</span>
            <span className="ml-[8px] text-[13px] font-bold">°,</span>
            <Mic size={16} className="ml-[8px] fill-[#0a6cd8]" />
            <Keyboard size={17} className="ml-[7px]" />
            <Shirt size={17} className="ml-[7px] fill-[#0a6cd8]" />
            <LayoutGrid size={16} className="ml-[8px] fill-[#0a6cd8]" />
        </div>
        <div className="absolute left-[3px] top-[16px] w-[27px] h-[27px] rounded-[4px] bg-[#f25a1d] rotate-[-12deg] flex items-center justify-center">
            <svg width={20} height={18} viewBox="0 0 20 18">
                <path d="M17 4 C14 1 4 1 4 5 C4 9 16 8 16 13 C16 17 6 17 2 14" stroke="#fff" strokeWidth={3.4} fill="none" />
            </svg>
        </div>
    </div>
);

const App = () => {
    return (
        <div className="w-[2560px] h-[1371px] bg-black overflow-hidden relative flex flex-col [font-family:'Liberation_Sans','Noto_Sans_CJK_SC',sans-serif]">
            <div className="flex-1 flex min-h-0">
                <WatchList />
                <div className="w-[2140px] shrink-0 flex flex-col border-r border-[#c00000]">
                    <div className="flex h-[1336px] shrink-0">
                        <div className="w-[1905px] shrink-0 flex flex-col">
                            <Toolbar />
                            <KLineChart />
                            <IndicatorTabs />
                            <BlockTable />
                            <GroupTabs />
                        </div>
                        <QuotePanel />
                    </div>
                    <BottomRow />
                </div>
                <F10Panel />
            </div>
            <StatusBar />
            <ImeBar />
        </div>
    );
};

export default App;
